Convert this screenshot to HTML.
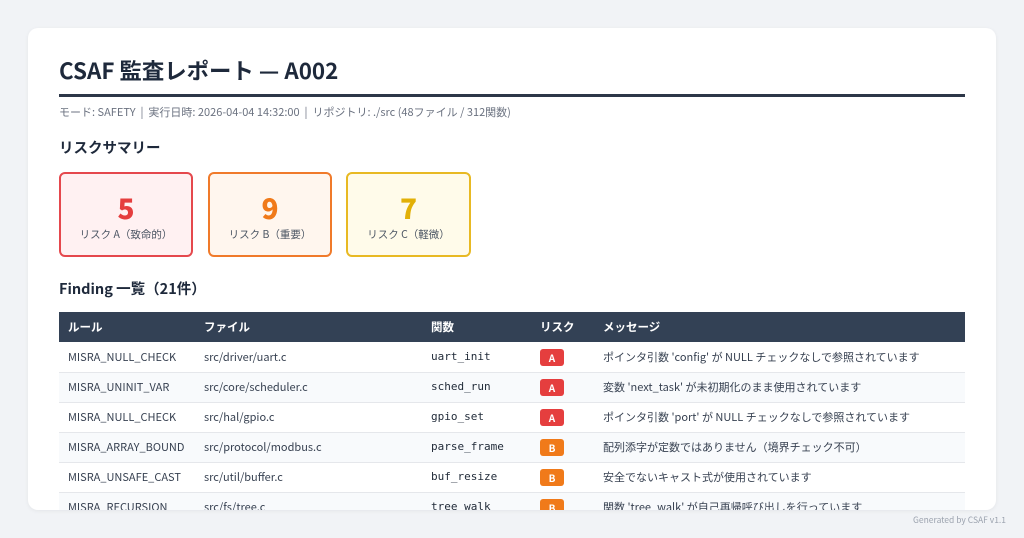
<!DOCTYPE html>
<html><head><meta charset="utf-8"><style>
*{margin:0;padding:0;box-sizing:border-box}
body{width:1024px;height:538px;background:#f1f3f6;font-family:"Noto Sans CJK JP","Liberation Sans",sans-serif;color:#1f2937;position:relative;overflow:hidden}
.card{position:absolute;left:28px;top:28px;width:968px;height:482px;background:#fff;border-radius:10px;overflow:hidden;box-shadow:0 1px 4px rgba(0,0,0,.06)}
.in{position:absolute;left:31px;top:0;width:906px}
h1{position:absolute;top:25px;font-size:22.4px;line-height:34px;font-weight:bold;color:#1e293b;white-space:nowrap}
.rule{position:absolute;top:66px;width:906px;height:3px;background:#2d3748}
.meta{position:absolute;top:75px;font-size:11px;line-height:18px;color:#6b7280;white-space:nowrap}
h2{position:absolute;font-size:14.5px;line-height:22px;font-weight:bold;color:#1e293b;white-space:nowrap}
.box{position:absolute;top:144px;height:85px;border:2px solid;border-radius:6px;text-align:center}
.box b{display:block;font-size:28px;margin-top:16px;line-height:36px;font-weight:900}
.box span{display:block;font-size:10.5px;line-height:16px;color:#4b5563;margin-top:1px}
table{position:absolute;top:284px;width:906px;border-collapse:collapse;font-size:11px}
th{background:#334155;color:#fff;text-align:left;height:30px;padding-left:9px;font-size:11.5px;vertical-align:middle}
td{height:30px;padding:0 0 0 9px;color:#374151;border-bottom:1px solid #e5e7eb;white-space:nowrap;vertical-align:middle;line-height:16px}
tr:nth-child(odd) td{background:#f8fafc}
.m{font-family:"DejaVu Sans Mono","Liberation Mono",monospace;font-size:11px;color:#1f2937}
.bd{display:inline-block;width:24px;height:17px;line-height:17px;text-align:center;color:#fff;font-size:10px;font-weight:bold;border-radius:3px;vertical-align:middle}
.A{background:#e53e3e}.B{background:#f07a1a}
.foot{position:absolute;right:18px;top:514px;font-size:8.5px;color:#9ca3af}
</style></head><body>
<div class="card"><div class="in">
<h1>CSAF 監査レポート — A002</h1>
<div class="rule"></div>
<div class="meta">モード: SAFETY &nbsp;|&nbsp; 実行日時: 2026-04-04 14:32:00 &nbsp;|&nbsp; リポジトリ: ./src (48ファイル / 312関数)</div>
<h2 style="top:109px">リスクサマリー</h2>
<div class="box" style="left:0;width:134px;border-color:#e5484d;background:#fff1f2"><b style="color:#e53e3e">5</b><span>リスク A（致命的）</span></div>
<div class="box" style="left:149px;width:124px;border-color:#f07a2a;background:#fff6ee"><b style="color:#f07a1a">9</b><span>リスク B（重要）</span></div>
<div class="box" style="left:287px;width:125px;border-color:#e8b923;background:#fffbea"><b style="color:#e2b007">7</b><span>リスク C（軽微）</span></div>
<h2 style="top:250px">Finding 一覧（21件）</h2>
<table>
<tr><th style="width:136px">ルール</th><th style="width:227px">ファイル</th><th style="width:109px">関数</th><th style="width:63px">リスク</th><th>メッセージ</th></tr>
<tr><td>MISRA_NULL_CHECK</td><td>src/driver/uart.c</td><td class="m">uart_init</td><td><span class="bd A">A</span></td><td>ポインタ引数 'config' が NULL チェックなしで参照されています</td></tr>
<tr><td>MISRA_UNINIT_VAR</td><td>src/core/scheduler.c</td><td class="m">sched_run</td><td><span class="bd A">A</span></td><td>変数 'next_task' が未初期化のまま使用されています</td></tr>
<tr><td>MISRA_NULL_CHECK</td><td>src/hal/gpio.c</td><td class="m">gpio_set</td><td><span class="bd A">A</span></td><td>ポインタ引数 'port' が NULL チェックなしで参照されています</td></tr>
<tr><td>MISRA_ARRAY_BOUND</td><td>src/protocol/modbus.c</td><td class="m">parse_frame</td><td><span class="bd B">B</span></td><td>配列添字が定数ではありません（境界チェック不可）</td></tr>
<tr><td>MISRA_UNSAFE_CAST</td><td>src/util/buffer.c</td><td class="m">buf_resize</td><td><span class="bd B">B</span></td><td>安全でないキャスト式が使用されています</td></tr>
<tr><td>MISRA_RECURSION</td><td>src/fs/tree.c</td><td class="m">tree_walk</td><td><span class="bd B">B</span></td><td>関数 'tree_walk' が自己再帰呼び出しを行っています</td></tr>
</table>
</div></div>
<div class="foot">Generated by CSAF v1.1</div>
</body></html>
